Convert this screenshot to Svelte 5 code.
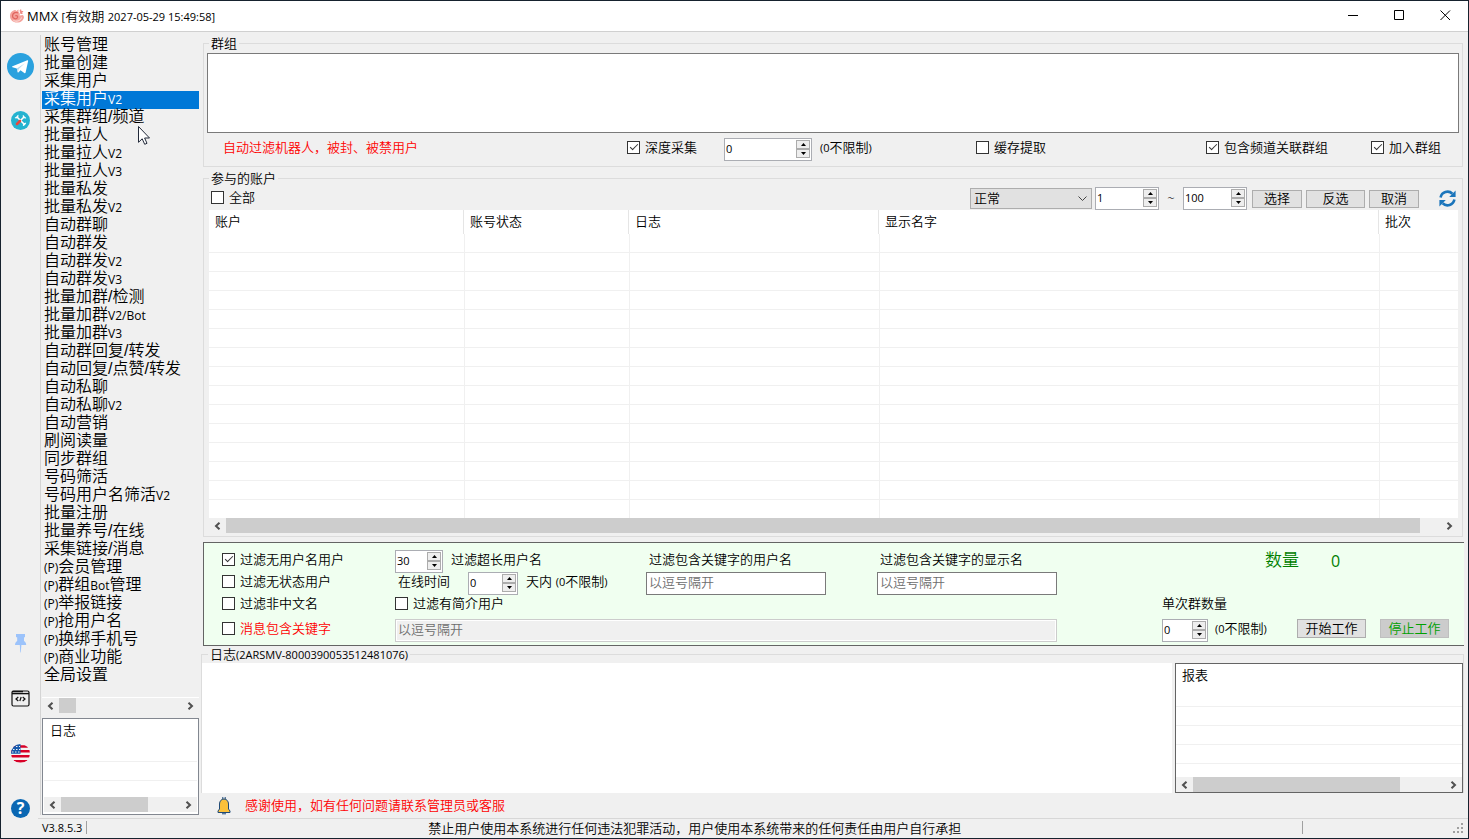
<script lang="ts">
    type Column = { title: string; width?: number };

    const menu = [
        "账号管理", "批量创建", "采集用户", "采集用户V2", "采集群组/频道", "批量拉人",
        "批量拉人V2", "批量拉人V3", "批量私发", "批量私发V2", "自动群聊", "自动群发",
        "自动群发V2", "自动群发V3", "批量加群/检测", "批量加群V2/Bot", "批量加群V3",
        "自动群回复/转发", "自动回复/点赞/转发", "自动私聊", "自动私聊V2", "自动营销",
        "刷阅读量", "同步群组", "号码筛活", "号码用户名筛活V2", "批量注册", "批量养号/在线",
        "采集链接/消息", "(P)会员管理", "(P)群组Bot管理", "(P)举报链接", "(P)抢用户名",
        "(P)换绑手机号", "(P)商业功能", "全局设置",
    ];

    const columns: Column[] = [
        { title: "账户", width: 255 },
        { title: "账号状态", width: 165 },
        { title: "日志", width: 250 },
        { title: "显示名字", width: 500 },
        { title: "批次" },
    ];

    let active = $state("采集用户V2");

    // split into latin and CJK runs, latin is set one step smaller
    function runs(text: string) {
        return text
            .split(/([\[\]()A-Za-z0-9~][\w()\[\]/.:\- ~]*)/)
            .filter(Boolean)
            .map((s) => ({ s, latin: /^[\[\]()A-Za-z0-9~]/.test(s) }));
    }

    function step(e: MouseEvent, dir: number) {
        const box = (e.currentTarget as HTMLElement).closest(".spin");
        const input = box?.querySelector("input");
        if (input) input.value = String(Math.max(0, Number(input.value) + dir));
    }
</script>

{#snippet mix(text: string)}{#each runs(text) as r}{#if r.latin}<span class="latin">{r.s}</span>{:else}{r.s}{/if}{/each}{/snippet}

{#snippet check(text: string, checked = false)}
    <label class="check">
        <input type="checkbox" {checked} />
        <span>{@render mix(text)}</span>
    </label>
{/snippet}

{#snippet spin(label: string, value: string, width: number)}
    <span class="spin" style:width="{width}px">
        <input type="text" inputmode="numeric" aria-label={label} {value} />
        <span class="arrows">
            <button type="button" aria-label="增加" onclick={(e) => step(e, 1)}>
                <svg viewBox="0 0 5 3" width="5" height="3"><path d="M0 3L2.5 0L5 3z" /></svg>
            </button>
            <button type="button" aria-label="减少" onclick={(e) => step(e, -1)}>
                <svg viewBox="0 0 5 3" width="5" height="3"><path d="M0 0L2.5 3L5 0z" /></svg>
            </button>
        </span>
    </span>
{/snippet}

{#snippet scrollbar(ratio: number)}
    <div class="scrollbar">
        <button type="button" aria-label="向左">
            <svg viewBox="0 0 7 8" width="7" height="8"><path d="M5.5 0.7L2 4L5.5 7.3" /></svg>
        </button>
        <div class="track"><div class="thumb" style:width="{ratio}%"></div></div>
        <button type="button" aria-label="向右">
            <svg viewBox="0 0 7 8" width="7" height="8"><path d="M1.5 0.7L5 4L1.5 7.3" /></svg>
        </button>
    </div>
{/snippet}

{#snippet grid(cols: Column[], rows: number)}
    <table>
        <colgroup>
            {#each cols as c}
                <col style:width={c.width ? `${c.width}px` : "auto"} />
            {/each}
        </colgroup>
        <thead>
            <tr>{#each cols as c}<th>{c.title}</th>{/each}</tr>
        </thead>
        <tbody>
            {#each Array(rows) as _}
                <tr>{#each cols as _c}<td></td>{/each}</tr>
            {/each}
        </tbody>
    </table>
{/snippet}

<div class="window">
    <header>
        <svg class="logo" viewBox="0 0 16 16" width="16" height="16">
            <path d="M1 8C1 4.500 3.500 2 7 2L6.500 3.500L9.500 1.500L9.500 4C11 5 11 6.500 10.500 7.500L14 7L15 9C14.500 12.500 12 14.500 8 14.500C4 14.500 1 12 1 8z" fill="#f5a39c" />
            <path d="M9 5C6.500 3.500 3.500 5 3.500 8C3.500 11 7.500 11.800 8.500 9.500C9 8 7.500 7 6.300 8" fill="none" stroke="#e0655f" stroke-width="1.300" />
            <path d="M4.500 12.500C7.500 14 11.500 13 12.500 9.500" fill="none" stroke="#fbe3e0" stroke-width="1" />
            <path d="M10.500 2.500L12 1L12.500 3L14.500 3L13 5L14 6L11.500 6z" fill="#ef8d86" />
        </svg>
        <h1><span class="brand">MMX</span> {@render mix("[有效期 2027-05-29 15:49:58]")}</h1>
        <div class="caption">
            <button type="button" aria-label="最小化"><svg viewBox="0 0 11 11" width="11" height="11"><path d="M0 5.500H10" /></svg></button>
            <button type="button" aria-label="最大化"><svg viewBox="0 0 11 11" width="11" height="11"><path d="M.5.5H9.500V9.500H.5z" /></svg></button>
            <button type="button" aria-label="关闭"><svg viewBox="0 0 11 11" width="11" height="11"><path d="M.5.5L10 10M10 .5L.5 10" /></svg></button>
        </div>
    </header>

    <div class="body">
        <div class="tools">
            <div class="top">
                <button type="button" aria-label="Telegram">
                    <svg viewBox="0 0 27 27" width="27" height="27">
                        <circle cx="13.500" cy="13.500" r="13.500" fill="#2aa1de" />
                        <path d="M5.500 13.200L20.300 7.200C21 7 21.300 7.400 21.100 8.200L18.600 19.600C18.400 20.400 17.900 20.500 17.300 20.100L13.500 17.300L11.600 19.200C11.200 19.600 10.700 19.500 10.600 18.900L9.800 15.500L5.500 14.200C4.900 14 4.900 13.500 5.500 13.200z" fill="#fff" />
                        <path d="M9.800 15.500L17.800 10.200L11.700 16L10.900 19.200z" fill="#b5d9ee" />
                    </svg>
                </button>
                <button type="button" aria-label="工具">
                    <svg viewBox="0 0 19 19" width="19" height="19">
                        <circle cx="9.500" cy="9.500" r="9.500" fill="#25b3d0" />
                        <path d="M5.500 5.500L14 14" stroke="#fff" stroke-width="1.600" />
                        <path d="M13.500 5.500L9 10" stroke="#fff" stroke-width="1.600" />
                        <path d="M9 10L6 13" stroke="#e8483f" stroke-width="2.600" stroke-linecap="round" />
                        <path d="M4 6.500A2 2 0 0 0 6.800 4M12.400 4.300A2 2 0 0 0 15 6.800M12.500 14.800A2 2 0 0 1 15 12.400" fill="none" stroke="#fff" stroke-width="1.200" />
                    </svg>
                </button>
            </div>
            <div class="bottom">
                <button type="button" aria-label="置顶">
                    <svg viewBox="0 0 19 19" width="19" height="19" fill="#9cc3fb">
                        <path d="M5 0H14V3L13 3.500V7C14.500 8 15.200 9 15.200 11H4C4 9 4.700 8 6.200 7V3.500L5 3z" />
                        <path d="M8.800 11H10.400L9.800 18.500H9.300z" />
                    </svg>
                </button>
                <button type="button" aria-label="控制台">
                    <svg viewBox="0 0 19 19" width="19" height="19" fill="none" stroke="#111" stroke-width="1.200">
                        <rect x="1" y="2" width="17" height="15" rx="1.500" />
                        <path d="M1 4.600H18" stroke-width="1.400" />
                        <path d="M1 2.600H12" stroke-width="1.400" />
                        <path d="M7.300 8L5 10L7.300 12M11.700 8L14 10L11.700 12M10.200 8L8.800 12" />
                    </svg>
                </button>
                <button type="button" aria-label="语言">
                    <svg viewBox="0 0 19 19" width="19" height="19">
                        <clipPath id="round"><circle cx="9.500" cy="9.500" r="9.500" /></clipPath>
                        <g clip-path="url(#round)">
                            <path d="M0 0H19V19H0z" fill="#f4f4f4" />
                            <path d="M0 2.500H19M0 7.300H19M0 12.300H19M0 17.200H19" stroke="#d80027" stroke-width="2.400" />
                            <path d="M0 0H9.500V9.800H0z" fill="#1559ad" />
                            <path d="M5 2.500H6.500M8 2.500H9M2 5.500H3.500M5 5.500H6.500M8 5.500H9M1 8H2.500M4 8H5.500M7 8H8.500" stroke="#f0f0f0" stroke-width="1.200" />
                        </g>
                    </svg>
                </button>
                <button type="button" class="help" aria-label="帮助">?</button>
            </div>
        </div>

        <aside>
            <ul>
                {#each menu as item}
                    <li>
                        <button type="button" class:active={item === active} onclick={() => (active = item)}>{@render mix(item)}</button>
                    </li>
                {/each}
            </ul>
            {@render scrollbar(14)}
            <div class="minilog">
                {@render grid([{ title: "日志" }], 2)}
                {@render scrollbar(73)}
            </div>
        </aside>

        <main>
            <fieldset>
                <legend>群组</legend>
                <textarea aria-label="群组"></textarea>
                <div class="options">
                    <span class="warn">自动过滤机器人，被封、被禁用户</span>
                    {@render check("深度采集", true)}
                    <span class="row">{@render spin("深度采集", "0", 88)}<span>{@render mix("(0不限制)")}</span></span>
                    {@render check("缓存提取")}
                    {@render check("包含频道关联群组", true)}
                    {@render check("加入群组", true)}
                </div>
            </fieldset>

            <fieldset class="accounts">
                <legend>参与的账户</legend>
                <div class="toolbar">
                    {@render check("全部")}
                    <div class="select">
                        <select aria-label="状态"><option>正常</option></select>
                        <svg viewBox="0 0 9 6" width="9" height="6"><path d="M.5.500L4.500 4.500L8.500.500" /></svg>
                    </div>
                    {@render spin("起始", "1", 64)}
                    <span class="tilde">~</span>
                    {@render spin("结束", "100", 64)}
                    <div class="picks">
                        <button type="button" class="btn">选择</button>
                        <button type="button" class="btn wide">反选</button>
                        <button type="button" class="btn">取消</button>
                    </div>
                    <button type="button" class="refresh" aria-label="刷新">
                        <svg viewBox="0 0 17 17" width="17" height="17">
                            <path d="M1.600 7.400A7 7 0 0 1 13.400 3.700M15.400 9.600A7 7 0 0 1 3.600 13.300" fill="none" stroke="#1b75bb" stroke-width="2.600" />
                            <path d="M16.600.500V7H10.200zM.4 16.500V10H6.800z" fill="#1b75bb" />
                        </svg>
                    </button>
                </div>
                {@render grid(columns, 15)}
                {@render scrollbar(98.3)}
            </fieldset>

            <section class="filters">
                {@render check("过滤无用户名用户", true)}
                <div class="row">{@render spin("用户名长度", "30", 48)}<span>过滤超长用户名</span></div>
                <label class="caption-text" for="kw-user">过滤包含关键字的用户名</label>
                <label class="caption-text" for="kw-name">过滤包含关键字的显示名</label>
                <div class="count"><span>数量</span><output>0</output></div>

                {@render check("过滤无状态用户")}
                <div class="row"><span class="online">在线时间</span>{@render spin("在线时间", "0", 50)}<span>{@render mix("天内 (0不限制)")}</span></div>
                <input id="kw-user" type="text" placeholder="以逗号隔开" />
                <input id="kw-name" type="text" placeholder="以逗号隔开" />
                <span></span>

                {@render check("过滤非中文名")}
                <div class="bio">{@render check("过滤有简介用户")}</div>
                <span class="batch-title">单次群数量</span>

                <div class="warn">{@render check("消息包含关键字")}</div>
                <input class="message" type="text" aria-label="消息包含关键字" placeholder="以逗号隔开" disabled />
                <div class="actions">
                    {@render spin("单次群数量", "0", 46)}
                    <span class="limit">{@render mix("(0不限制)")}</span>
                    <button type="button" class="btn job">开始工作</button>
                    <button type="button" class="btn job stop">停止工作</button>
                </div>
            </section>

            <fieldset class="log">
                <legend>{@render mix("日志(2ARSMV-8000390053512481076)")}</legend>
                <div class="output"></div>
                <div class="report">
                    {@render grid([{ title: "报表" }], 4)}
                    {@render scrollbar(82)}
                </div>
            </fieldset>

            <p class="notice">
                <svg viewBox="0 0 14 18" width="14" height="18">
                    <path d="M5.800 0V2.500M8.200 0V2.500M1 14L2.500 12V7C2.500 4 4.500 2 7 2C9.500 2 11.500 4 11.500 7V12L13 14V15.500H1zM5 16.800H9" fill="#fbc13c" stroke="#1f4a78" stroke-width="1" />
                </svg>
                <span>感谢使用，如有任何问题请联系管理员或客服</span>
            </p>
        </main>
    </div>

    <footer>
        <span class="version latin">V3.8.5.3</span>
        <span class="law">禁止用户使用本系统进行任何违法犯罪活动，用户使用本系统带来的任何责任由用户自行承担</span>
        <svg class="grip" viewBox="0 0 11 11" width="11" height="11" fill="#a0a0a0">
            <path d="M8 0h2v2h-2zM4 4h2v2h-2zM8 4h2v2h-2zM0 8h2v2h-2zM4 8h2v2h-2zM8 8h2v2h-2z" />
        </svg>
    </footer>

    <svg class="pointer" viewBox="0 0 12 19" width="12" height="19">
        <path d="M.5.500V16.300L4.200 12.800L6.700 18.300L9 17.300L6.600 12H11.500z" fill="#fff" stroke="#222a3a" />
    </svg>
</div>

<style>
    :global(body) {
        margin: 0;
    }

    .window {
        position: relative;
        display: flex;
        flex-direction: column;
        min-height: 100vh;
        box-sizing: border-box;
        border: 1px solid #16222e;
        background: #f0f0f0;
        color: #000;
        font: 350 13px/17px "Liberation Sans", "Noto Sans CJK SC", sans-serif;
        white-space: nowrap;
    }

    button,
    input,
    select,
    textarea {
        box-sizing: border-box;
        margin: 0;
        padding: 0;
        border: 0;
        border-radius: 0;
        background: none;
        color: inherit;
        font: inherit;
    }

    svg {
        display: block;
        flex: none;
    }

    .latin {
        font-family: "Open Sans", sans-serif;
        font-size: 11px;
        font-weight: 400;
        line-height: 1;
    }

    .row {
        display: flex;
        gap: 8px;
    }

    .warn {
        color: #f00;
    }

    /* title bar */
    header {
        display: flex;
        align-items: center;
        height: 30px;
        padding-left: 8px;
        border-bottom: 1px solid #d0d0d0;
        background: #fff;
    }

    h1 {
        flex: 1;
        margin: 0 0 0 2px;
        font: inherit;
    }

    .brand {
        font-family: "Open Sans", sans-serif;
        font-weight: 400;
        line-height: 1;
    }

    .caption {
        display: flex;
        align-self: flex-start;
    }

    .caption button {
        display: grid;
        place-items: center;
        width: 46px;
        height: 28px;
    }

    .caption path {
        fill: none;
        stroke: #000;
    }

    /* icon strip */
    .body {
        flex: 1;
        display: flex;
    }

    .tools {
        display: flex;
        flex-direction: column;
        justify-content: space-between;
        width: 39px;
        padding-top: 21px;
    }

    .top,
    .bottom {
        display: grid;
        justify-items: center;
        gap: 31px;
    }

    .bottom {
        gap: 36px;
    }

    .help {
        width: 19px;
        height: 19px;
        border-radius: 50%;
        background: #0a67b3;
        color: #fff;
        font: 700 16px/19px "Open Sans", sans-serif;
    }

    /* menu */
    aside {
        display: flex;
        flex-direction: column;
        width: 157px;
        margin: 3px 2px 3px 0;
        padding: 2px 0 0 1px;
        border-left: 1px solid #d4d4d4;
    }

    ul {
        flex: 1;
        margin: 0;
        padding: 0 0 12px;
        border-bottom: 1px solid #fff;
        list-style: none;
    }

    li button {
        display: block;
        width: 100%;
        height: 18px;
        padding: 0 0 2px 2px;
        font-size: 16px;
        line-height: 16px;
        text-align: left;
    }

    li .latin {
        font-size: 12px;
    }

    li .active {
        background: #0078d7;
        color: #fff;
    }

    .minilog {
        display: flex;
        flex-direction: column;
        justify-content: space-between;
        height: 93px;
        margin-top: 5px;
        padding: 0 1px 2px;
        border: 1px solid #828790;
        background: #fff;
    }

    /* scroll bars */
    .scrollbar {
        display: flex;
        height: 15px;
        background: #f0f0f0;
    }

    .scrollbar button {
        display: grid;
        place-items: center;
        width: 17px;
        height: 15px;
    }

    .scrollbar path {
        fill: none;
        stroke: #505050;
        stroke-width: 2;
    }

    .track {
        flex: 1;
    }

    .thumb {
        height: 100%;
        background: #cdcdcd;
    }

    /* group boxes */
    main {
        flex: 1;
        display: flex;
        flex-direction: column;
        min-width: 0;
        padding: 3px 4px 0 0;
    }

    fieldset {
        min-width: 0;
        margin: 0 1px 3px 2px;
        padding: 0 3px;
        border: 1px solid #dcdcdc;
    }

    legend {
        margin-left: 2px;
        padding: 0 2px;
        line-height: 17px;
    }

    textarea {
        display: block;
        width: 100%;
        height: 80px;
        margin-top: 1px;
        border: 1px solid #7a7a7a;
        background: #fff;
        resize: none;
    }

    .options {
        display: grid;
        grid-template-columns: 404px 97px 252px 1fr 165px 88px;
        height: 28px;
        padding: 5px 0 0 16px;
        line-height: 19px;
    }

    .check {
        display: flex;
        align-items: center;
        align-self: start;
        gap: 5px;
    }

    .check input {
        flex: none;
        display: grid;
        place-items: center;
        width: 13px;
        height: 13px;
        appearance: none;
        border: 1px solid #333;
        background: #fff;
    }

    .check input:checked::before {
        content: "";
        width: 7px;
        height: 3px;
        margin-bottom: 3px;
        border: solid #333;
        border-width: 0 0 1px 1px;
        transform: rotate(-45deg);
    }

    .spin {
        flex: none;
        display: flex;
        box-sizing: border-box;
        height: 23px;
        padding: 1px;
        border: 1px solid #abadb3;
        background: #fff;
    }

    .spin input {
        flex: 1;
        min-width: 0;
        height: 17px;
        font: 11px/17px "Open Sans", sans-serif;
    }

    .arrows {
        display: flex;
        flex-direction: column;
    }

    .arrows button {
        display: grid;
        place-items: center;
        width: 14px;
        height: 9px;
        border: 1px solid #acacac;
        background: #eee;
    }

    .btn {
        width: 50px;
        height: 18px;
        padding-bottom: 1px;
        border: 1px solid #adadad;
        background: #e1e1e1;
        line-height: 15px;
    }

    .btn.wide {
        width: 59px;
    }

    /* accounts */
    .accounts {
        padding-bottom: 3px;
    }

    .accounts :is(table, .scrollbar) {
        margin: 0 1px 0 2px;
    }

    .toolbar {
        display: flex;
        align-items: center;
        height: 23px;
        padding: 0 3px 0 4px;
    }

    .toolbar .check {
        align-self: center;
        padding-bottom: 2px;
    }

    .select {
        display: grid;
        align-items: center;
        width: 122px;
        height: 21px;
        margin: 0 3px 0 auto;
        box-sizing: border-box;
        border: 1px solid #adadad;
        background: #e1e1e1;
    }

    .select select,
    .select svg {
        grid-area: 1 / 1;
    }

    .select select {
        padding-left: 3px;
        appearance: none;
        line-height: 19px;
    }

    .select svg {
        justify-self: end;
        margin-right: 4px;
        fill: none;
        stroke: #444;
        pointer-events: none;
    }

    .tilde {
        width: 24px;
        font-family: "Open Sans", sans-serif;
        text-align: center;
    }

    .picks {
        display: flex;
        gap: 4px;
        margin: 0 20px 0 5px;
    }

    table {
        width: 100%;
        table-layout: fixed;
        border-spacing: 0;
        background: #fff;
    }

    .accounts table {
        width: calc(100% - 3px);
    }

    th {
        height: 24px;
        box-sizing: border-box;
        padding: 0 6px 2px;
        border-right: 1px solid #e5e5e5;
        font-weight: inherit;
        text-align: left;
    }

    th:last-child {
        border-right: 0;
    }

    td {
        height: 19px;
        box-sizing: border-box;
        padding: 0;
        border-bottom: 1px solid #f0f0f0;
    }

    td + td {
        border-left: 1px solid #f0f0f0;
    }

    .accounts tbody tr:last-child td {
        border-bottom: 0;
        height: 18px;
    }

    /* filters */
    .filters {
        display: grid;
        grid-template-columns: 173px 251px 231px 180px 1fr;
        grid-template-rows: 22px 22px 25px 23px;
        margin: 2px 0 0 2px;
        padding: 7px 0 3px 18px;
        border: 1px solid #646464;
        border-right: 0;
        background: #f0fff0;
        line-height: 19px;
    }

    .filters > input {
        width: 180px;
        height: 23px;
        padding: 0 2px 2px;
        border: 1px solid #7a7a7a;
        background: #fff;
    }

    .filters > input::placeholder {
        color: #6d6d6d;
    }

    .filters > .message {
        grid-column: span 3;
        width: 662px;
        border-color: #ccc;
        background: #f0f0f0;
        box-shadow: inset 0 0 0 1px #fff;
    }

    .caption-text {
        padding-left: 3px;
    }

    .online {
        margin: 0 10px 0 3px;
    }

    .bio {
        grid-column: span 3;
    }

    .count,
    .batch-title,
    .actions {
        justify-self: end;
        width: 302px;
        box-sizing: border-box;
    }

    .count {
        display: flex;
        gap: 32px;
        padding-left: 103px;
        color: #008000;
        font-size: 17px;
        line-height: 22px;
    }

    .count output {
        font-family: "Open Sans", sans-serif;
        font-size: 16px;
        font-weight: 400;
    }

    .actions {
        display: flex;
        gap: 14px;
    }

    .limit {
        width: 68px;
        margin-left: -7px;
    }

    .job {
        width: 69px;
        height: 19px;
    }

    .stop {
        border-color: #bfbfbf;
        background: #ccc;
        color: #00a000;
    }

    /* log */
    .log {
        flex: 1;
        display: flex;
        gap: 3px;
        margin: 0;
        padding: 0;
        border-bottom: 0;
    }

    .log legend {
        margin-left: 6px;
    }

    .output {
        flex: 1;
        background: #fff;
    }

    .report {
        display: flex;
        flex-direction: column;
        justify-content: space-between;
        width: 286px;
        min-height: 127px;
        border: 1px solid #646464;
        background: #fff;
    }

    .notice {
        display: flex;
        align-items: center;
        gap: 14px;
        height: 25px;
        margin: 0;
        padding-left: 16px;
        color: #f00;
    }

    /* status bar */
    footer {
        display: flex;
        height: 19px;
        margin-left: 37px;
        border-top: 1px solid #d7d7d7;
    }

    .version {
        height: 13px;
        margin-top: 2px;
        padding: 0 4px;
        border-right: 1px solid #a0a0a0;
        line-height: 14px;
    }

    .law {
        flex: 1;
        height: 13px;
        margin-top: 2px;
        border-right: 1px solid #a0a0a0;
        line-height: 16px;
        text-align: center;
    }

    .grip {
        margin: 4px 4px 0 150px;
    }

    .pointer {
        position: absolute;
        top: 125px;
        left: 137px;
        pointer-events: none;
    }
</style>
